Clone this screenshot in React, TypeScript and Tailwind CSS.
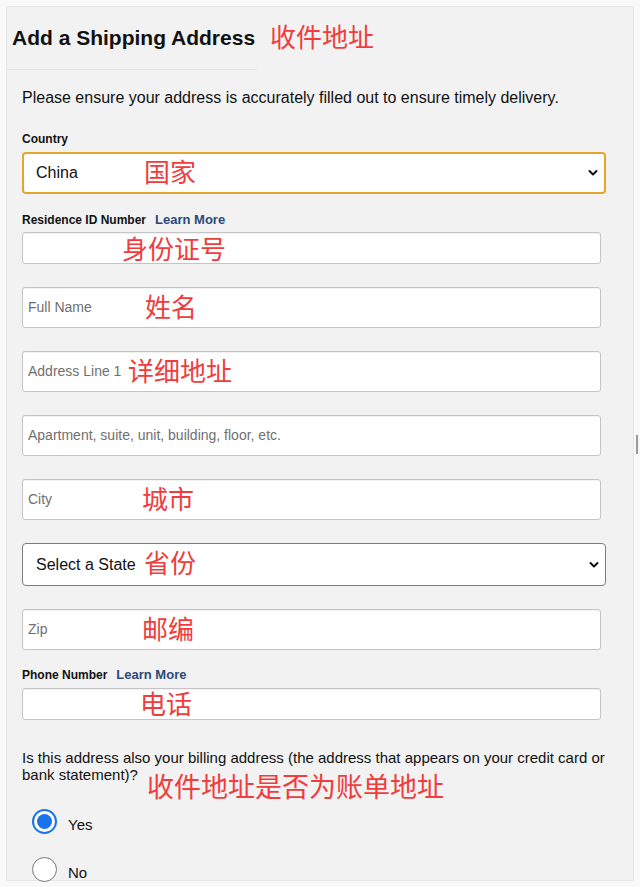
import type { ReactNode } from "react";

const sans = "font-['Liberation_Sans',Arial,sans-serif]";
const note = "pointer-events-none absolute whitespace-nowrap font-['Noto_Sans_CJK_SC','Microsoft_YaHei',sans-serif] text-[26px] leading-none text-[#f03c3c]";

function Chevron() {
  return (
    <svg className="absolute right-[6px] top-1/2 -translate-y-1/2" width="10" height="7" viewBox="0 0 10 7" fill="none">
      <path d="M1.5 1.5 5 5l3.5-3.5" stroke="#111" strokeWidth="2" strokeLinecap="round" strokeLinejoin="round" />
    </svg>
  );
}

function Select({ value, focused, children }: { value: string; focused?: boolean; children?: ReactNode }) {
  return (
    <div
      className={
        focused
          ? "relative flex h-[42px] w-[584px] items-center rounded-[4px] border-2 border-[#e3a82b] bg-white pl-[12px] text-[16px] text-[#111]"
          : "relative flex h-[43px] w-[584px] items-center rounded-[4px] border border-[#7d7d7d] bg-white pl-[13px] text-[16px] text-[#111]"
      }
    >
      {value}
      {children}
      <Chevron />
    </div>
  );
}

function Input({ placeholder, tall = true, children }: { placeholder?: string; tall?: boolean; children?: ReactNode }) {
  return (
    <div
      className={
        (tall ? "h-[41px]" : "h-[32px]") +
        " relative flex w-[579px] items-center rounded-[3px] border border-[#c4c4c4] bg-white pl-[5px] text-[14px] text-[#6f6f6f] shadow-[inset_0_1px_1px_rgba(0,0,0,0.06)]"
      }
    >
      {placeholder}
      {children}
    </div>
  );
}

function Label({ text, link }: { text: string; link?: boolean }) {
  return (
    <div className="flex items-baseline gap-[9px] text-[12px] leading-[16px]">
      <span className="font-bold text-[#111]">{text}</span>
      {link && <span className="text-[13px] font-semibold text-[#2b4a78]">Learn More</span>}
    </div>
  );
}

function Radio({ checked, label }: { checked?: boolean; label: string }) {
  return (
    <div className="flex items-center gap-[11px] pl-[10px]">
      {checked ? (
        <span className="flex size-[25px] items-center justify-center rounded-full border-2 border-[#1a73e8] bg-white">
          <span className="size-[15px] rounded-full bg-[#1a73e8]" />
        </span>
      ) : (
        <span className="size-[25px] rounded-full border border-[#767676] bg-white" />
      )}
      <span className="relative top-[4px] text-[15px] text-[#111]">{label}</span>
    </div>
  );
}

export default function App() {
  return (
    <div className={`${sans} relative min-h-[887px] bg-[#f9f9f9] pl-[6px] pr-[6px] pt-[6px]`}>
      <div className="relative h-[875px] w-[628px] border border-[#e6e6e6] bg-[#f2f2f2]">
        <div className="relative flex h-[63px] w-[250px] items-center border-b border-[#e4e4e4] pl-[5px]">
          <h1 className="text-[21px] font-bold text-[#111]">Add a Shipping Address</h1>
          <span className={`${note} left-[263px] top-[16px]`}>收件地址</span>
        </div>

        <div className="flex flex-col pl-[15px]">
          <p className="mt-[19px] text-[16px] leading-[18px] text-[#111]">
            Please ensure your address is accurately filled out to ensure timely delivery.
          </p>

          <div className="mt-[24px]">
            <Label text="Country" />
          </div>
          <div className="mt-[5px]">
            <Select value="China" focused>
              <span className={`${note} left-[120px] top-[4px]`}>国家</span>
            </Select>
          </div>

          <div className="mt-[18px]">
            <Label text="Residence ID Number" link />
          </div>
          <div className="mt-[4px]">
            <Input tall={false}>
              <span className={`${note} left-[99px] top-[2px]`}>身份证号</span>
            </Input>
          </div>

          <div className="mt-[23px]">
            <Input placeholder="Full Name">
              <span className={`${note} left-[122px] top-[5px]`}>姓名</span>
            </Input>
          </div>
          <div className="mt-[23px]">
            <Input placeholder="Address Line 1">
              <span className={`${note} left-[105px] top-[5px]`}>详细地址</span>
            </Input>
          </div>
          <div className="mt-[23px]">
            <Input placeholder="Apartment, suite, unit, building, floor, etc." />
          </div>
          <div className="mt-[23px]">
            <Input placeholder="City">
              <span className={`${note} left-[119px] top-[5px]`}>城市</span>
            </Input>
          </div>
          <div className="mt-[23px]">
            <Select value="Select a State">
              <span className={`${note} left-[121px] top-[5px]`}>省份</span>
            </Select>
          </div>
          <div className="mt-[23px]">
            <Input placeholder="Zip">
              <span className={`${note} left-[119px] top-[5px]`}>邮编</span>
            </Input>
          </div>

          <div className="mt-[17px]">
            <Label text="Phone Number" link />
          </div>
          <div className="mt-[5px]">
            <Input tall={false}>
              <span className={`${note} left-[117px] top-[1px]`}>电话</span>
            </Input>
          </div>

          <div className="relative mt-[29px] w-[590px] text-[15px] leading-[17px] text-[#111]">
            Is this address also your billing address (the address that appears on your credit card or bank statement)?
            <span className={`${note} left-[125px] top-[23px] text-[27px]`}>收件地址是否为账单地址</span>
          </div>

          <div className="mt-[26px] flex flex-col gap-[23px]">
            <Radio checked label="Yes" />
            <Radio label="No" />
          </div>
        </div>
      </div>
      <div className="absolute right-[2px] top-[435px] h-[19px] w-[2px] bg-[#9a9a9a]" />
    </div>
  );
}
